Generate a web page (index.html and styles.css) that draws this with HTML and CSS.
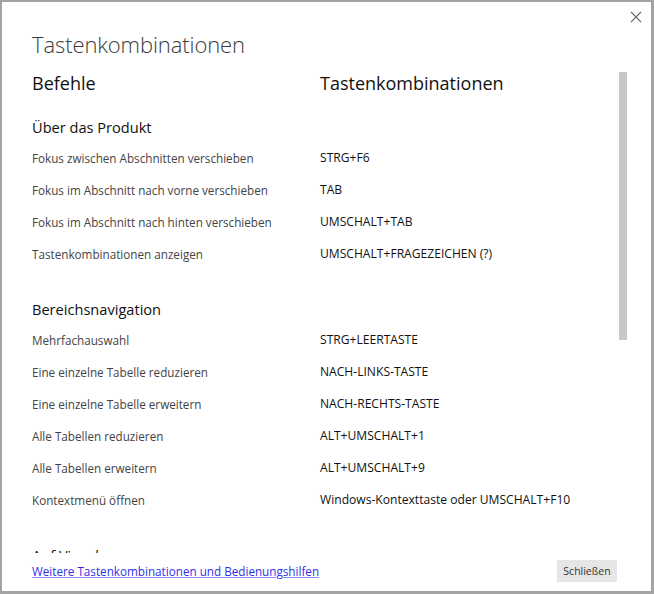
FILE: index.html
```html
<!DOCTYPE html>
<html lang="de">
<head>
<meta charset="utf-8">
<title>Tastenkombinationen</title>
<link rel="stylesheet" href="styles.css">
</head>
<body>
<div class="dialog">
  <button class="close" aria-label="Schließen">
    <svg width="12" height="12" viewBox="0 0 12 12"><path d="M1 1 L11 11 M11 1 L1 11" stroke="#6b6b6b" stroke-width="1.1" fill="none"/></svg>
  </button>
  <h1 class="title">Tastenkombinationen</h1>
  <div class="scroll">
    <div class="colheads">
      <div class="c1">Befehle</div>
      <div class="c2">Tastenkombinationen</div>
    </div>
    <section class="group">
      <h2 class="ghead">Über das Produkt</h2>
      <div class="row"><div class="c1">Fokus zwischen Abschnitten verschieben</div><div class="c2">STRG+F6</div></div>
      <div class="row"><div class="c1">Fokus im Abschnitt nach vorne verschieben</div><div class="c2">TAB</div></div>
      <div class="row"><div class="c1">Fokus im Abschnitt nach hinten verschieben</div><div class="c2">UMSCHALT+TAB</div></div>
      <div class="row"><div class="c1">Tastenkombinationen anzeigen</div><div class="c2">UMSCHALT+FRAGEZEICHEN (?)</div></div>
    </section>
    <section class="group">
      <h2 class="ghead">Bereichsnavigation</h2>
      <div class="row"><div class="c1">Mehrfachauswahl</div><div class="c2">STRG+LEERTASTE</div></div>
      <div class="row"><div class="c1">Eine einzelne Tabelle reduzieren</div><div class="c2">NACH-LINKS-TASTE</div></div>
      <div class="row"><div class="c1">Eine einzelne Tabelle erweitern</div><div class="c2">NACH-RECHTS-TASTE</div></div>
      <div class="row"><div class="c1">Alle Tabellen reduzieren</div><div class="c2">ALT+UMSCHALT+1</div></div>
      <div class="row"><div class="c1">Alle Tabellen erweitern</div><div class="c2">ALT+UMSCHALT+9</div></div>
      <div class="row"><div class="c1">Kontextmenü öffnen</div><div class="c2">Windows-Kontexttaste oder UMSCHALT+F10</div></div>
    </section>
    <section class="group">
      <h2 class="ghead">Auf Visual</h2>
    </section>
  </div>
  <div class="thumb"></div>
  <div class="footer">
    <a class="link" href="#">Weitere Tastenkombinationen und Bedienungshilfen</a>
    <button class="btn">Schließen</button>
  </div>
</div>
</body>
</html>
```
FILE: styles.css
```css
html, body {
  margin: 0;
  padding: 0;
  background: #ffffff;
}
body {
  font-family: "Open Sans", "Noto Sans", sans-serif;
  color: #222;
}
.dialog {
  position: relative;
  width: 654px;
  height: 594px;
  box-sizing: border-box;
  border-style: solid;
  border-color: #a3a3a3;
  border-width: 2px 3px 3px 2px;
  background: #fff;
  display: flex;
  flex-direction: column;
  padding-left: 30px;
}
.close {
  position: absolute;
  top: 7px;
  right: 7px;
  width: 16px;
  height: 16px;
  padding: 0;
  border: 0;
  background: transparent;
  display: flex;
  align-items: center;
  justify-content: center;
}
.title {
  margin: 0;
  padding-top: 28px;
  height: 28px;
  line-height: 28px;
  font-size: 22px;
  font-weight: 300;
  color: #3a3a3a;
  letter-spacing: -0.1px;
}
.scroll {
  flex: 1;
  overflow: hidden;
  min-height: 0;
}
.colheads {
  display: flex;
  padding-top: 10px;
  height: 30px;
  line-height: 30px;
  font-size: 18px;
  color: #111;
  margin-bottom: 14px;
}
.c1 {
  width: 288px;
  flex: none;
}
.c2 {
  flex: 1;
}
.group + .group {
  margin-top: 24px;
}
.ghead {
  margin: 0;
  height: 30px;
  line-height: 30px;
  font-size: 14.6px;
  font-weight: 400;
  color: #111;
}
.row {
  display: flex;
  height: 32px;
  line-height: 32px;
}
.row .c1 {
  font-size: 11.7px;
  color: #444;
}
.row .c2 {
  font-size: 12.1px;
  color: #111;
}
.thumb {
  position: absolute;
  left: 617px;
  top: 70px;
  width: 8px;
  height: 268px;
  background: #c8c8c8;
}
.footer {
  height: 38px;
  flex: none;
  display: flex;
  align-items: center;
  justify-content: space-between;
  padding-right: 34px;
  padding-bottom: 2px;
  box-sizing: border-box;
}
.link {
  font-size: 11.7px;
  color: #3030e8;
  text-decoration: underline;
  text-decoration-color: #8a8af0;
}
.btn {
  font-family: inherit;
  width: 60px;
  height: 22px;
  padding: 0;
  border: 0;
  background: #e6e6e6;
  font-size: 10.5px;
  color: #333;
}
```
